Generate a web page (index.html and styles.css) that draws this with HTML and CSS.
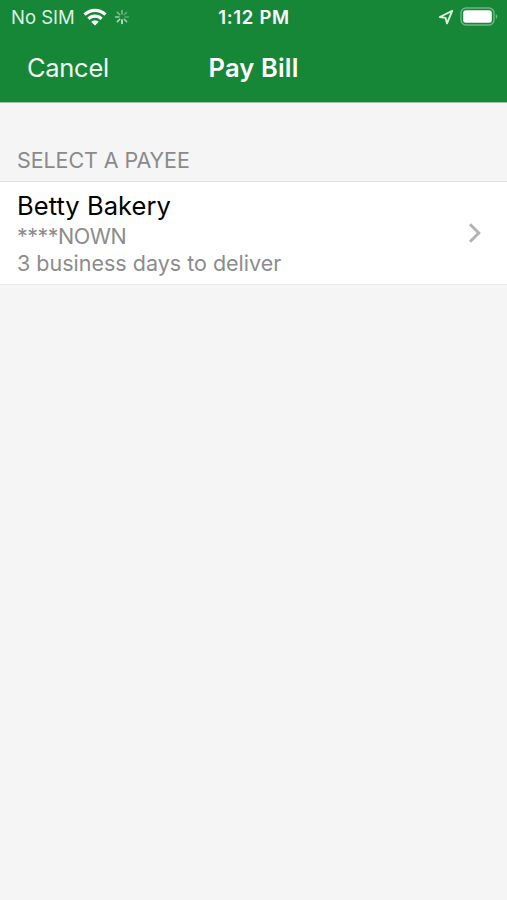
FILE: index.html
```html
<!DOCTYPE html>
<html lang="en">
  <head>
    <meta charset="UTF-8" />
    <meta name="viewport" content="width=device-width, initial-scale=1.0" />
    <title>Pay Bill</title>
    <link rel="stylesheet" href="styles.css">
  </head>
  <body>
    <header class="header">
      <div class="status-bar">
        <div class="status-left">
          <span class="carrier">No SIM</span>
          <svg class="wifi" width="24" height="18" viewBox="0 0 24 18" fill="none" stroke="#fff" stroke-width="3.2">
            <path d="M1.5 6.6a15 15 0 0 1 21 0" />
            <path d="M5.4 10.9a9.4 9.4 0 0 1 13.2 0" />
            <path d="M12 17.6l-3.8-3.8a5.4 5.4 0 0 1 7.6 0z" fill="#fff" stroke="none" />
          </svg>
          <svg class="spinner" width="16" height="16" viewBox="0 0 16 16" stroke="#fff" stroke-width="1.5" stroke-linecap="round">
            <path d="M8 1.5v3.5" opacity=".45" />
            <path d="M12.6 3.4l-2.4 2.4" opacity=".3" />
            <path d="M14.5 8h-3.5" opacity=".3" />
            <path d="M12.6 12.6l-2.4-2.4" opacity=".6" />
            <path d="M8 14.5v-3.5" opacity=".9" />
            <path d="M3.4 12.6l2.4-2.4" opacity=".7" />
            <path d="M1.5 8h3.5" opacity=".6" />
            <path d="M3.4 3.4l2.4 2.4" opacity=".45" />
          </svg>
        </div>
        <span class="time">1:12 PM</span>
        <div class="status-right">
          <svg class="location" width="16" height="16" viewBox="0 0 16 16" fill="none" stroke="#d9f0df" stroke-width="1.9" stroke-linejoin="round">
            <path d="M14.2 1.8L1.8 8l5.8.9 1.4 5.5z" />
          </svg>
          <svg class="battery" width="38" height="20" viewBox="0 0 38 20">
            <rect x="1" y="1" width="33" height="17" rx="5" fill="none" stroke="#fff" stroke-opacity=".4" stroke-width="1.4" />
            <rect x="3.2" y="3.2" width="28.6" height="12.6" rx="2.5" fill="#fff" />
            <path d="M35.8 7c2 .8 2 4.3 0 5.1z" fill="#fff" fill-opacity=".4" />
          </svg>
        </div>
      </div>
      <nav class="nav-bar">
        <a class="cancel">Cancel</a>
        <h1 class="title">Pay Bill</h1>
      </nav>
    </header>
    <main>
      <h2 class="section-title">SELECT A PAYEE</h2>
      <div class="payee">
        <div class="payee-info">
          <p class="payee-name">Betty Bakery</p>
          <p class="payee-detail account">****NOWN</p>
          <p class="payee-detail">3 business days to deliver</p>
        </div>
        <svg class="chevron" width="14" height="22" viewBox="0 0 14 22" fill="none" stroke="#b4b4b4" stroke-width="3">
          <path d="M2 2.2l8.8 8.8L2 19.8" />
        </svg>
      </div>
    </main>
  </body>
</html>
```

FILE: styles.css
```css
* {
  box-sizing: border-box;
}
body {
  margin: 0;
  min-height: 100vh;
  font-family: Inter, "Liberation Sans", sans-serif;
  background-color: #f5f5f5;
}
h1,
h2,
p {
  margin: 0;
  font-weight: 400;
  white-space: nowrap;
}
.header {
  height: 103px;
  color: #fff;
  background-color: #168637;
  border-bottom: 1px solid #a5bfac;
}
.status-bar {
  display: grid;
  grid-template-columns: 1fr auto 1fr;
  align-items: center;
  height: 34px;
  padding: 0 9px 0 11px;
  font-size: 18.5px;
}
.status-left,
.status-right {
  display: flex;
  align-items: center;
}
.status-right {
  justify-content: flex-end;
  gap: 6px;
}
.carrier {
  color: #def3e3;
}
.wifi {
  margin-left: 8px;
}
.spinner {
  margin-left: 7px;
}
.time {
  font-weight: 600;
  letter-spacing: 0.7px;
  margin-right: 1px;
}
.nav-bar {
  display: grid;
  grid-template-columns: 1fr auto 1fr;
  align-items: center;
  height: 66px;
  padding: 0 27px;
}
.cancel {
  font-size: 25.5px;
  letter-spacing: -0.3px;
  color: #f0faf2;
}
.title {
  font-size: 25.5px;
  font-weight: 600;
  letter-spacing: 0.15px;
}
.section-title {
  height: 78px;
  padding: 43px 17px 0;
  font-size: 21.5px;
  line-height: 28px;
  letter-spacing: -0.1px;
  color: #8a8a8a;
}
.payee {
  display: flex;
  justify-content: space-between;
  align-items: center;
  height: 104px;
  padding: 0 25px 0 17px;
  background-color: #fff;
  border-top: 1px solid #e3e3e3;
  border-bottom: 1px solid #e9e9e9;
}
.payee-info {
  padding-top: 1px;
}
.payee-name {
  padding-bottom: 2px;
  font-size: 25.5px;
  line-height: 31px;
  letter-spacing: 0.05px;
  color: #000;
}
.payee-detail {
  font-size: 21.5px;
  line-height: 27px;
  color: #8c8c8c;
}
.account {
  letter-spacing: -0.5px;
}
```
